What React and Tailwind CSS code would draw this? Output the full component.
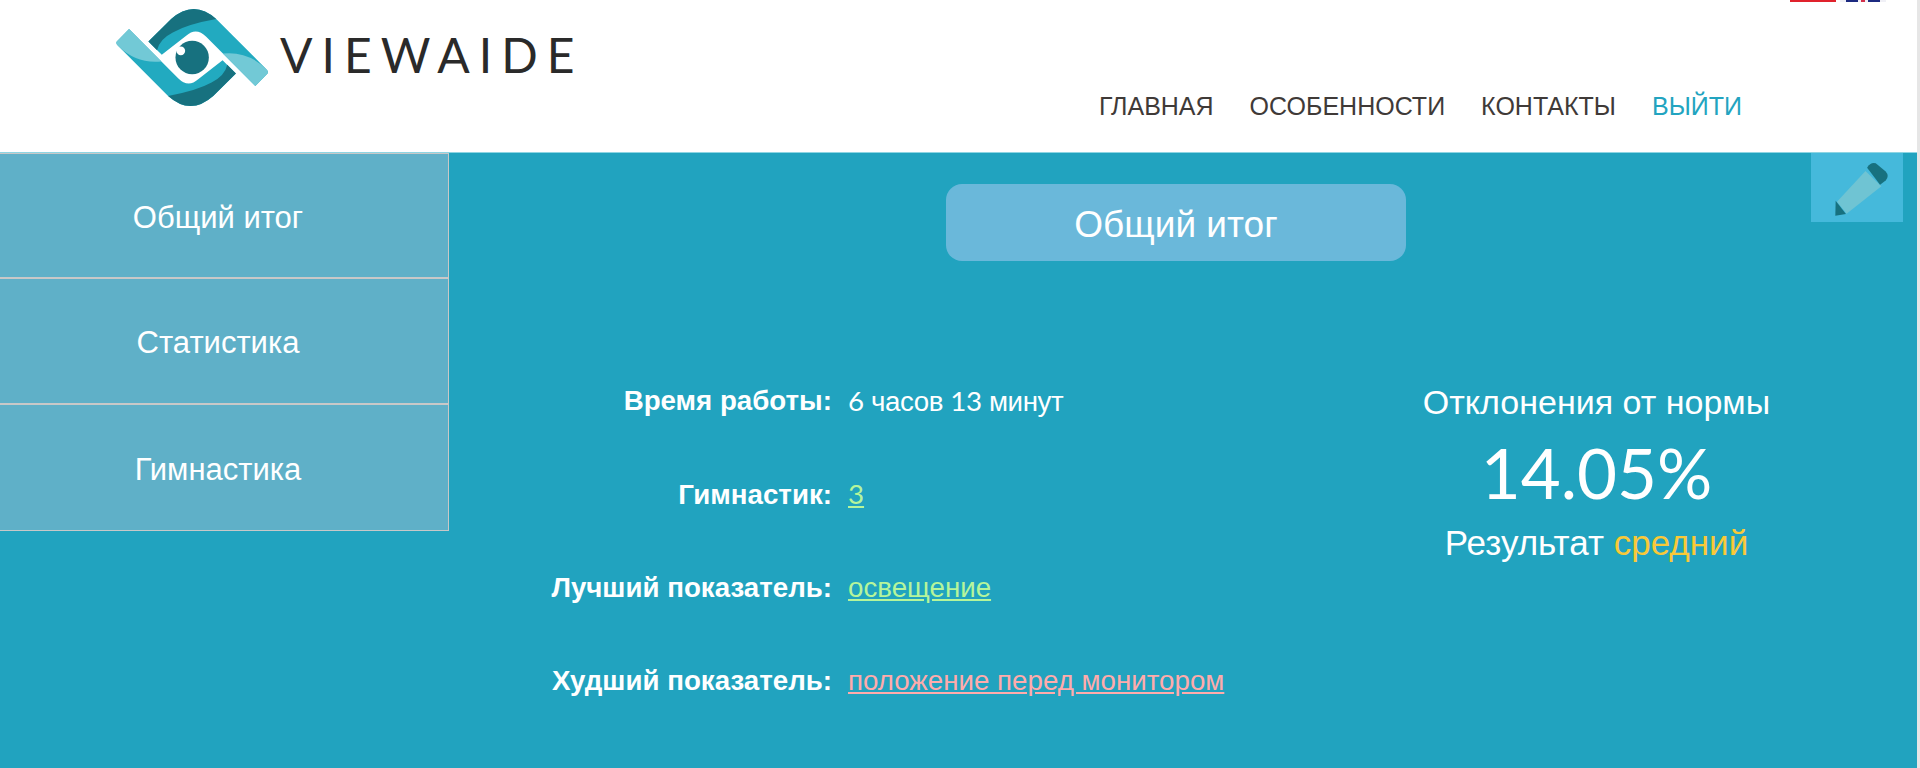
const lato = "font-['Lato',sans-serif]";

function Logo() {
  const band = (
    <>
      <path d="M88 85 L235 232 Q265 262 295 235 L368 178 L408 218 L340 285 Q272 345 205 285 L55 135 Q45 125 55 118 Z" fill="#22aac0" />
      <path d="M205 285 Q290 270 335 245 Q375 225 382 192 L408 218 L340 285 Q272 345 205 285 Z" fill="#17717f" />
      <path d="M88 85 L185 182 Q110 190 55 135 Q45 125 55 118 Z" fill="#72c9d6" />
    </>
  );
  return (
    <svg viewBox="40 10 470 320" className="w-[157px] h-[107px] shrink-0">
      {band}
      <g transform="rotate(180 277 170)">{band}</g>
      <circle cx="277" cy="170" r="50" fill="#17717f" />
      <circle cx="243" cy="150" r="13" fill="#fff" />
    </svg>
  );
}

function Pencil() {
  return (
    <svg viewBox="405 473 160 160" className="w-[53px] h-[53px] ml-[9px] mt-[4px]">
      <path d="M497 497 L545 543 L440 626 L411 590 Z" fill="#6fc4d3" />
      <path d="M502 487 Q512 470 528 474 L558 499 Q570 512 558 526 L541 539 Z" fill="#17717f" />
      <path d="M407 587 L438 627 L406 632 Z" fill="#17717f" />
    </svg>
  );
}

function Flags() {
  return (
    <div className="absolute top-0 right-[31px] flex gap-[4px]">
      <div className="w-[46px] h-[2px] bg-[#e0222c]" />
      <div className="w-[46px] h-[2px] bg-[#f0f0f6] flex justify-center gap-[3px] px-[6px]">
        <div className="flex-1 bg-[#1c2a80]" />
        <div className="w-[4px] bg-[#d3304a]" />
        <div className="flex-1 bg-[#1c2a80]" />
      </div>
    </div>
  );
}

const navItems = [
  { label: "ГЛАВНАЯ", color: "text-[#3f3a38]" },
  { label: "ОСОБЕННОСТИ", color: "text-[#3f3a38]" },
  { label: "КОНТАКТЫ", color: "text-[#3f3a38]" },
  { label: "ВЫЙТИ", color: "text-[#22a4c0]" },
];

const sideItems = ["Общий итог", "Статистика", "Гимнастика"];

const rows = [
  {
    label: "Время работы:",
    value: (
      <>
        <span className={lato}>6</span> часов <span className={lato}>13</span> минут
      </>
    ),
    color: "text-white tracking-[-0.4px]",
  },
  { label: "Гимнастик:", value: <span className={lato}>3</span>, color: "text-[#b5f59b] underline" },
  { label: "Лучший показатель:", value: "освещение", color: "text-[#b5f59b] underline" },
  { label: "Худший показатель:", value: "положение перед монитором", color: "text-[#ffabab] underline" },
];

export default function App() {
  return (
    <div className="font-['Liberation_Sans',sans-serif] h-[768px] bg-[#e6e6e6] overflow-hidden">
      <div className="relative h-[768px] w-[1917px] overflow-hidden bg-[#21a3bf]">
        <header className="relative h-[153px] bg-white border-b border-[#8ed5e3] flex justify-between">
          <Flags />
          <div className="flex items-start pl-[113px] pt-[4px]">
            <Logo />
            <span className={`${lato} ml-[10px] mt-[22px] text-[48px] leading-[58px] font-normal tracking-[9px] text-[#2a2a2a]`}>VIEWAIDE</span>
          </div>
          <nav className="flex gap-[36px] pt-[90px] pr-[175px] text-[25px] leading-[32px]">
            {navItems.map((item) => (
              <a key={item.label} className={item.color}>{item.label}</a>
            ))}
          </nav>
        </header>

        <main className="relative flex">
          <aside className="w-[449px] shrink-0 flex flex-col">
            {sideItems.map((item, index) => (
              <div
                key={item}
                className={`h-[126px] flex items-center justify-center pr-[12px] pt-[5px] bg-[#5fb0c8] border-r border-[#c8c8c8] text-white text-[31px] ${index === 0 ? "border-t" : ""} ${index === 2 ? "border-b" : "border-b-2"}`}
              >
                {item}
              </div>
            ))}
          </aside>

          <section className="flex-1 flex flex-col">
            <div className="flex justify-start pl-[497px] pt-[31px]">
              <div className="w-[460px] h-[77px] pt-[5px] rounded-[16px] bg-[#6ab8da] flex items-center justify-center text-white text-[37px]">
                Общий итог
              </div>
            </div>

            <div className="flex mt-[124px]">
              <div className="w-[727px] shrink-0 flex flex-col gap-[61.33px]">
                {rows.map((row) => (
                  <div key={row.label} className="flex gap-[16px] h-[32px] items-center text-[27.7px] whitespace-nowrap">
                    <div className="w-[383px] shrink-0 text-right font-bold text-white">{row.label}</div>
                    <a className={row.color}>{row.value}</a>
                  </div>
                ))}
              </div>
              <div className="w-[741px] shrink-0 flex flex-col items-center text-white -mt-[3px] pl-[100px]">
                <div className="text-[34px] leading-[40px]">Отклонения от нормы</div>
                <div className={`${lato} text-[69px] leading-[84px] mt-[9px]`}>14.05%</div>
                <div className="text-[35px] leading-[40px] mt-[8px]">
                  Результат <span className="text-[#f9c938]">средний</span>
                </div>
              </div>
            </div>
          </section>

          <button className="absolute top-0 right-[14px] w-[92px] h-[69px] bg-[#45b9db] flex items-center justify-center">
            <Pencil />
          </button>
        </main>
      </div>
    </div>
  );
}
